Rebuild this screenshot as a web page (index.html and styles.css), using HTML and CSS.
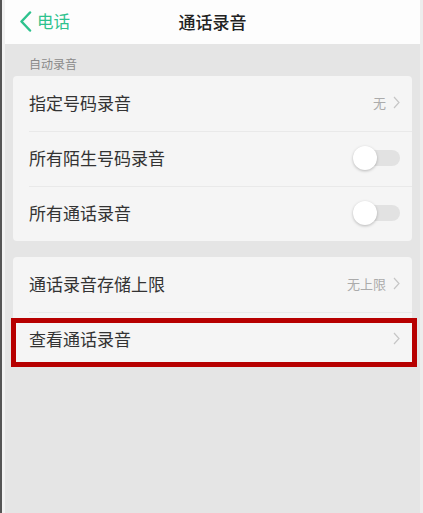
FILE: index.html
```html
<!DOCTYPE html>
<html lang="zh-CN">
<head>
<meta charset="utf-8">
<title>通话录音</title>
<link rel="stylesheet" href="styles.css">
</head>
<body>
<div class="frame">
  <div class="edge-dark"></div>
  <div class="edge-light"></div>
  <div class="screen">
    <header class="header">
      <div class="back">
        <svg class="back-icon" width="13" height="21" viewBox="0 0 13 21"><path d="M11 1.5 L2.5 10.5 L11 19.5" fill="none" stroke="#2ec28e" stroke-width="2.5" stroke-linecap="round" stroke-linejoin="round"/></svg>
        <span class="back-text">电话</span>
      </div>
      <div class="title">通话录音</div>
    </header>
    <div class="section-label">自动录音</div>
    <div class="card">
      <div class="row">
        <span class="row-text">指定号码录音</span>
        <span class="row-right"><span class="value">无</span><svg class="chev" width="7" height="13" viewBox="0 0 7 13"><path d="M1 1 L6 6.5 L1 12" fill="none" stroke="#c6c6c6" stroke-width="1.2"/></svg></span>
      </div>
      <div class="row">
        <span class="row-text">所有陌生号码录音</span>
        <span class="toggle"><span class="knob"></span></span>
      </div>
      <div class="row">
        <span class="row-text">所有通话录音</span>
        <span class="toggle"><span class="knob"></span></span>
      </div>
    </div>
    <div class="card card2">
      <div class="row">
        <span class="row-text">通话录音存储上限</span>
        <span class="row-right"><span class="value">无上限</span><svg class="chev" width="7" height="13" viewBox="0 0 7 13"><path d="M1 1 L6 6.5 L1 12" fill="none" stroke="#c6c6c6" stroke-width="1.2"/></svg></span>
      </div>
      <div class="row">
        <span class="row-text">查看通话录音</span>
        <span class="row-right"><svg class="chev" width="7" height="13" viewBox="0 0 7 13"><path d="M1 1 L6 6.5 L1 12" fill="none" stroke="#c6c6c6" stroke-width="1.2"/></svg></span>
      </div>
      <div class="highlight"></div>
    </div>
  </div>
  <div class="edge-right"></div>
</div>
</body>
</html>
```

FILE: styles.css
```css
* { box-sizing: border-box; }
html, body { margin: 0; padding: 0; }
body {
  width: 423px;
  height: 513px;
  overflow: hidden;
  font-family: "Noto Sans CJK SC", "Noto Sans", sans-serif;
  background: #e5e5e5;
}
.frame {
  display: flex;
  height: 513px;
}
.edge-dark { width: 2px; background: #555555; }
.edge-light { width: 3px; background: #f2f2f2; }
.edge-right { width: 3px; background: #ededed; }
.screen {
  flex: 1;
  background: #e5e5e5;
  display: flex;
  flex-direction: column;
}
.header {
  height: 44px;
  background: #fdfdfd;
  position: relative;
  display: flex;
  align-items: center;
  justify-content: center;
}
.back {
  position: absolute;
  left: 14px;
  top: 0;
  height: 44px;
  display: flex;
  align-items: center;
  gap: 5px;
}
.back-icon { display: block; margin-top: -2px; }
.back-text {
  font-size: 16.5px;
  color: #2ec28e;
  line-height: 20px;
  margin-top: -2px;
}
.title {
  font-size: 17px;
  font-weight: 500;
  color: #222222;
  margin-top: -2px;
}
.section-label {
  font-size: 12px;
  color: #8a8a8a;
  padding: 12px 0 0 24px;
  line-height: 16px;
  height: 32px;
}
.card {
  margin: 0 8px;
  background: #f5f5f5;
  border-radius: 4px;
  position: relative;
}
.card2 { margin-top: 16px; }
.row {
  height: 55px;
  display: flex;
  align-items: center;
  justify-content: space-between;
  padding: 0 12px 0 16px;
  position: relative;
}
.row + .row::before {
  content: "";
  position: absolute;
  left: 16px;
  right: 0;
  top: 0;
  height: 1px;
  background: #e9e9e9;
}
.row-text {
  font-size: 17px;
  color: #333333;
  margin-top: -2px;
}
.row-right {
  display: flex;
  align-items: center;
  gap: 7px;
}
.value {
  font-size: 13px;
  color: #ababab;
  margin-top: -2px;
}
.chev { display: block; margin-top: -2px; }
.toggle {
  width: 47px;
  height: 24px;
  position: relative;
  display: block;
  margin-top: -2px;
}
.toggle::before {
  content: "";
  position: absolute;
  left: 7px;
  right: 0;
  top: 4px;
  height: 16px;
  border-radius: 8px;
  background: #e2e2e2;
}
.knob {
  position: absolute;
  left: 0;
  top: 0;
  width: 24px;
  height: 24px;
  border-radius: 50%;
  background: #ffffff;
  box-shadow: 0 1px 3px rgba(0, 0, 0, 0.25);
}
.highlight {
  position: absolute;
  left: -2px;
  top: 61px;
  width: 406px;
  height: 49px;
  border: 5px solid #b70000;
  pointer-events: none;
}
```
